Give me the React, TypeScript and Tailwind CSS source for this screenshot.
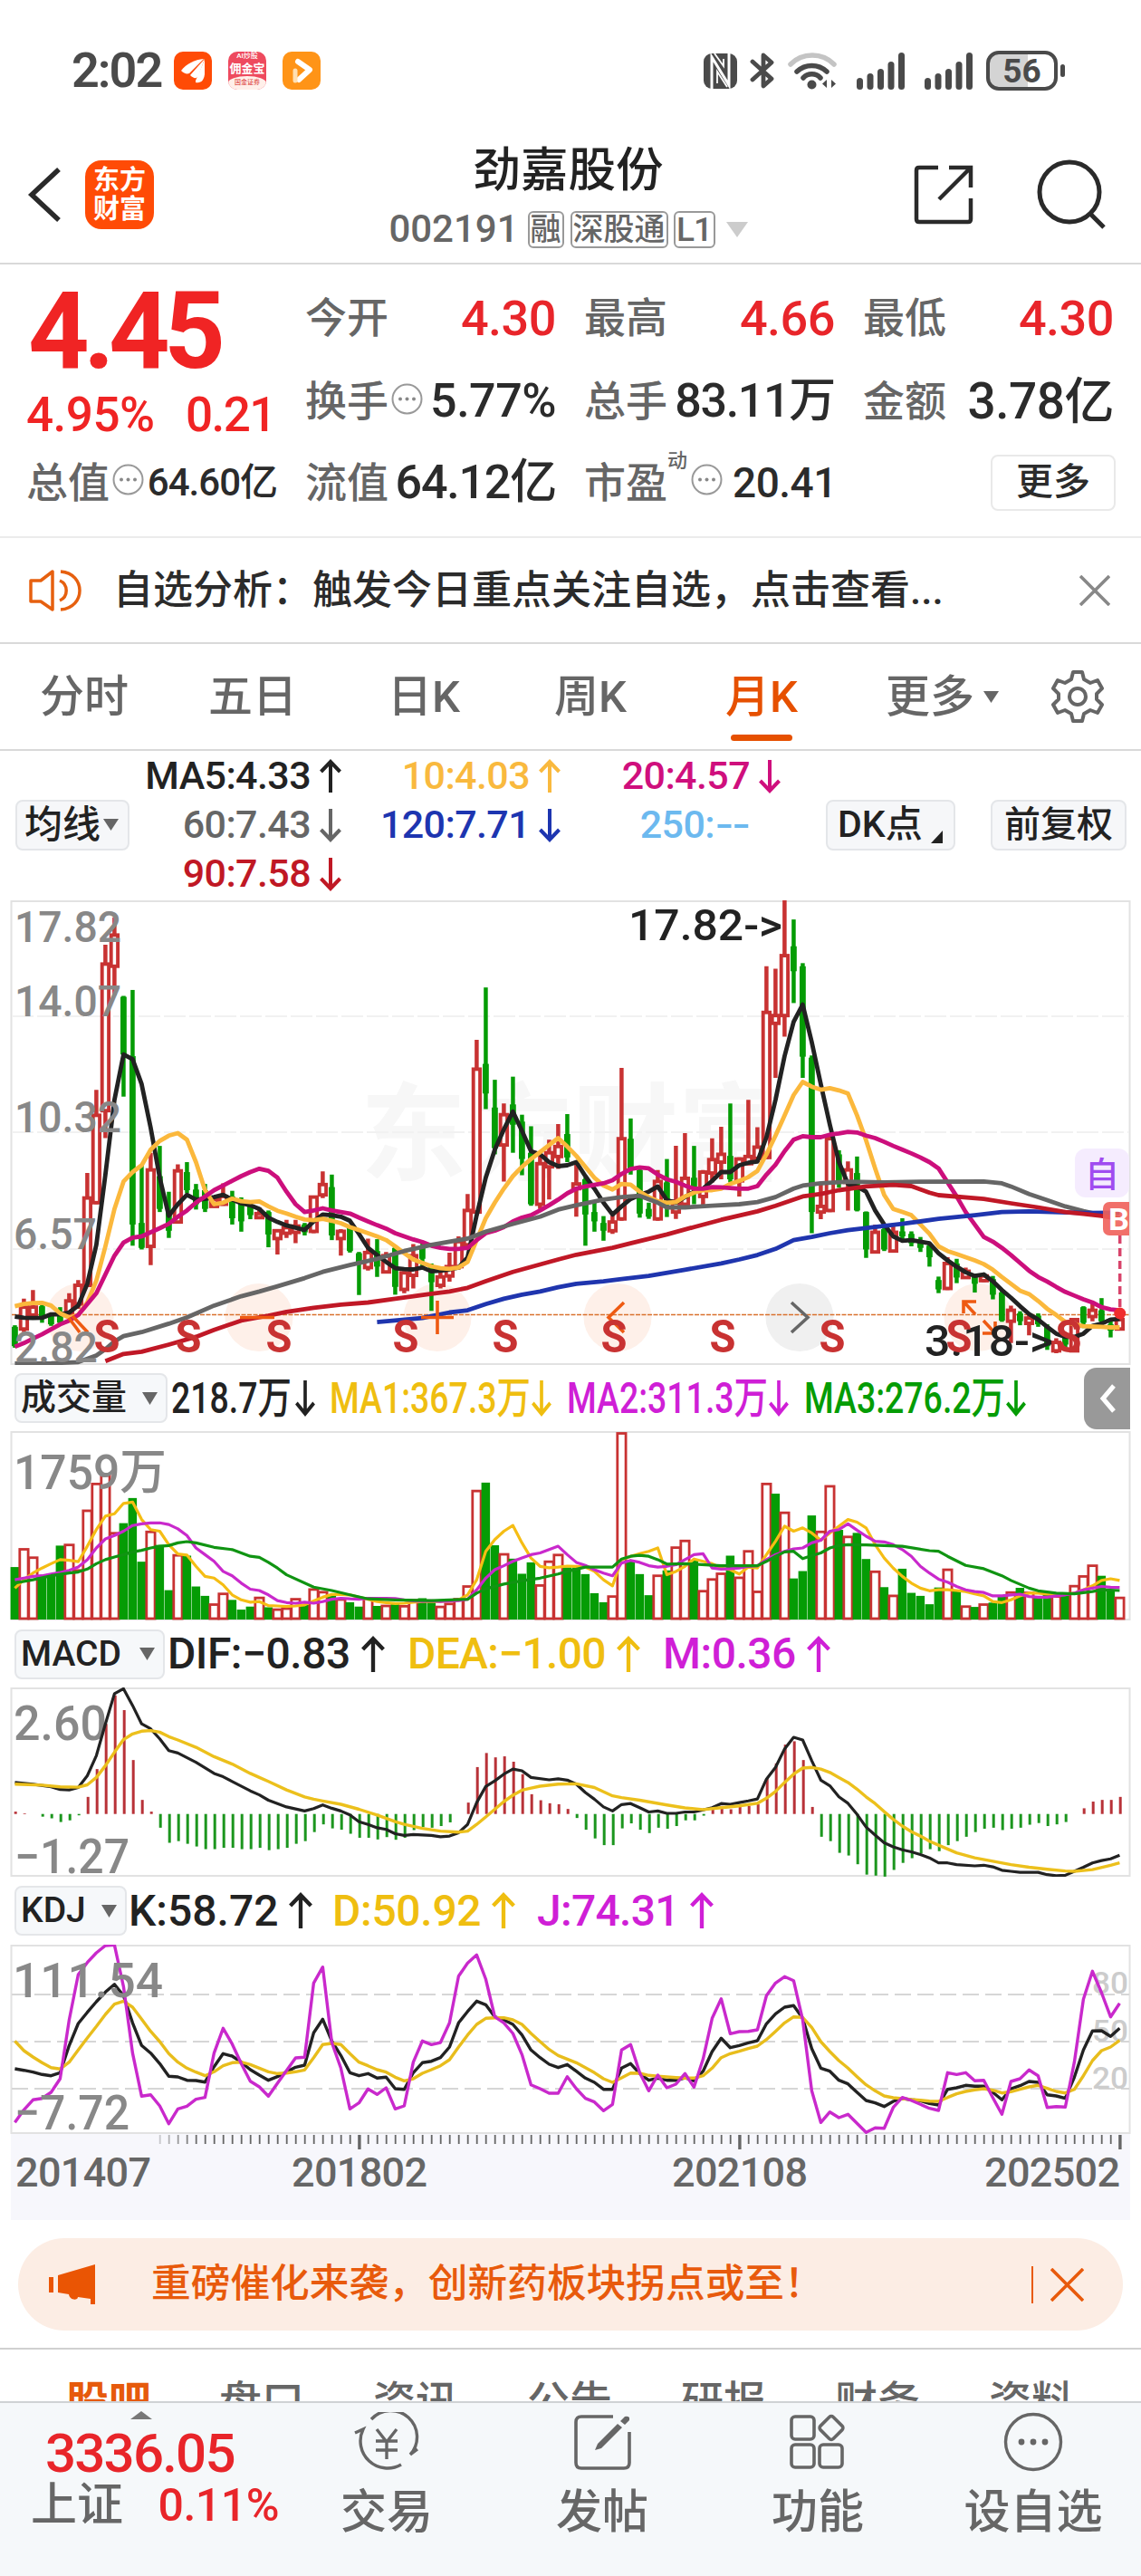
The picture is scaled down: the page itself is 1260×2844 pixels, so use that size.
import React from "react";

type Pt = [number, number];
type Tone = "r" | "g";

const RED = "#c83232";
const GREEN = "#059c05";

const X0 = 16.4;
const STEP = 10;
const xAt = (i: number) => X0 + STEP * i;

const seq = (...v: number[]): Pt[] => v.map((y, i) => [i, y]);

const path = (pts: Pt[], y: (v: number) => number) =>
  pts.map(([i, v], n) => `${n ? "L" : "M"}${xAt(i).toFixed(1)} ${y(v).toFixed(1)}`).join("");

/* ---------- chart data: every value is a depth measured down from the top of its pane group ---------- */

const candles = `g1403,1408,1470,1475 r1318,1345,1415,1425 r1290,1345,1370,1375 g1338,1342,1380,1395 g1365,1370,1400,1405 g1345,1360,1395,1400 r1300,1325,1365,1375 r1258,1275,1335,1350 r915,995,1275,1280 r648,730,1010,1015 r183,245,715,803 r96,152,252,345 g347,350,535,670 g328,540,1080,1148 g890,1075,1155,1160 r850,905,1150,1210 g828,925,1030,1040 g975,1040,1100,1123 r887,908,1072,1076 g880,912,970,980 g950,968,1015,1032 g950,970,1030,1040 r990,1000,1022,1025 r948,990,1015,1020 g972,990,1060,1080 g993,1000,1070,1103 g1015,1020,1050,1063 r1025,1045,1058,1060 g1035,1040,1112,1153 r1095,1100,1125,1176 r1065,1090,1108,1123 r1065,1085,1105,1140 g1075,1080,1105,1115 r987,992,1102,1108 r910,952,985,995 g920,960,1115,1130 r1095,1102,1125,1180 g1085,1092,1165,1170 g1168,1172,1205,1306 r1125,1170,1218,1228 g1127,1165,1215,1248 r1168,1180,1232,1236 g1150,1155,1280,1305 r1230,1235,1288,1300 r1143,1180,1243,1285 g1140,1148,1190,1222 g1205,1215,1265,1357 r1220,1248,1275,1285 r1170,1215,1245,1263 r1118,1135,1215,1225 r982,1035,1145,1150 r488,582,1040,1045 g320,565,660,710 g616,705,835,855 r692,728,825,942 g606,695,760,850 g728,750,870,922 g765,850,1015,1020 r860,885,1015,1030 r808,850,895,1000 r758,830,862,902 g726,790,865,880 r878,950,965,1055 g930,935,1048,1148 g1010,1040,1070,1103 g1053,1075,1100,1132 r1050,1072,1100,1110 r578,805,1062,1068 g740,805,900,920 g895,905,1045,1058 g1010,1030,1055,1062 r905,942,1062,1068 g870,945,1015,1056 r828,1005,1040,1062 r787,932,1015,1025 g828,930,965,1015 r905,912,990,1018 r804,872,915,945 r767,855,880,935 g692,860,935,945 r865,870,940,990 r680,862,885,890 r768,832,868,880 r252,400,865,870 r260,410,435,610 r41,218,410,478 g102,188,268,370 g242,252,542,610 g538,545,1040,1108 r950,1022,1040,1063 r795,805,1035,1040 g842,855,945,962 r878,905,945,1035 g862,915,1035,1038 g1038,1040,1160,1187 r1080,1105,1168,1170 g1080,1095,1160,1165 r1080,1105,1165,1168 g1060,1102,1118,1130 g1102,1110,1140,1150 g1120,1130,1155,1168 g1140,1148,1185,1215 g1247,1258,1288,1300 r1185,1205,1285,1290 g1190,1205,1250,1268 r1218,1230,1250,1252 g1240,1248,1270,1298 r1240,1245,1260,1265 g1245,1255,1305,1320 g1290,1298,1388,1392 r1340,1355,1390,1460 g1358,1365,1390,1403 r1368,1380,1397,1435 g1365,1372,1400,1408 g1400,1408,1470,1482 r1445,1458,1485,1493 g1430,1440,1465,1475 r1380,1385,1485,1490 g1342,1345,1395,1412 r1330,1355,1375,1390 g1316,1355,1390,1400 g1380,1400,1420,1442 r1365,1385,1415,1420`
  .split(" ")
  .map((s) => ({ tone: s[0] as Tone, v: s.slice(1).split(",").map(Number) }));

const ma5 = seq(1375, 1379, 1380, 1379, 1368, 1368, 1362, 1340, 1270, 1145, 920, 680, 535, 550, 630, 770, 930, 1052, 1015, 985, 1000, 998, 992, 985, 1000, 1012, 1018, 1030, 1058, 1072, 1083, 1090, 1097, 1070, 1048, 1050, 1055, 1068, 1110, 1155, 1178, 1200, 1220, 1223, 1224, 1218, 1230, 1228, 1224, 1218, 1185, 1050, 930, 840, 775, 718, 780, 845, 855, 880, 893, 890, 880, 925, 965, 1010, 1048, 1022, 998, 985, 975, 958, 1002, 1010, 992, 975, 965, 940, 912, 912, 890, 882, 878, 800, 680, 540, 430, 375, 495, 630, 760, 880, 950, 958, 975, 1035, 1080, 1118, 1132, 1130, 1135, 1140, 1172, 1195, 1215, 1233, 1245, 1240, 1262, 1290, 1315, 1342, 1367, 1385, 1408, 1430, 1440, 1440, 1430, 1405, 1398, 1385, 1383);
const ma10 = seq(1342, 1335, 1332, 1331, 1340, 1365, 1378, 1370, 1330, 1260, 1150, 1030, 942, 912, 890, 840, 812, 795, 787, 808, 880, 970, 1015, 1010, 997, 1005, 1008, 1006, 1022, 1036, 1045, 1055, 1064, 1066, 1062, 1068, 1076, 1088, 1098, 1108, 1118, 1130, 1150, 1172, 1192, 1203, 1214, 1220, 1222, 1218, 1200, 1130, 1060, 1010, 965, 925, 895, 870, 848, 825, 803, 830, 860, 895, 930, 955, 968, 950, 952, 975, 992, 1005, 1010, 1008, 990, 978, 970, 970, 965, 950, 940, 928, 908, 855, 795, 730, 665, 623, 638, 648, 643, 650, 660, 730, 810, 900, 985, 1030, 1040, 1050, 1080, 1110, 1150, 1165, 1175, 1185, 1195, 1207, 1225, 1248, 1270, 1292, 1303, 1325, 1350, 1370, 1392, 1400, 1406, 1407, 1408, 1410, 1410);
const ma20 = seq(1472, 1460, 1446, 1432, 1416, 1400, 1388, 1370, 1335, 1300, 1240, 1180, 1138, 1122, 1118, 1105, 1092, 1078, 1055, 1035, 1010, 990, 970, 955, 940, 925, 912, 901, 908, 930, 975, 1015, 1040, 1035, 1028, 1035, 1040, 1045, 1058, 1070, 1082, 1093, 1108, 1118, 1128, 1136, 1148, 1155, 1158, 1158, 1155, 1130, 1108, 1100, 1088, 1070, 1058, 1050, 1035, 1018, 1000, 980, 965, 958, 953, 948, 938, 918, 902, 897, 900, 920, 935, 943, 955, 965, 965, 960, 961, 963, 965, 965, 957, 920, 888, 845, 808, 797, 800, 800, 792, 788, 783, 785, 795, 803, 815, 828, 840, 852, 865, 880, 900, 945, 990, 1040, 1080, 1120, 1135, 1155, 1178, 1203, 1228, 1248, 1263, 1280, 1296, 1308, 1320, 1330, 1345, 1352, 1355);
const ma60: Pt[] = [[0, 1526], [4, 1525], [7, 1521], [9, 1500], [10, 1480], [11, 1455], [12, 1438], [14, 1425], [17, 1398], [19, 1378], [22, 1340], [25, 1310], [27, 1295], [29, 1278], [32, 1252], [34, 1232], [37, 1210], [40, 1190], [43, 1165], [46, 1145], [50, 1125], [52, 1103], [55, 1078], [58, 1055], [60, 1032], [62, 1018], [65, 1000], [67, 992], [69, 988], [71, 1010], [72, 1025], [74, 1025], [77, 1020], [80, 1015], [82, 1008], [84, 992], [86, 965], [87, 955], [89, 948], [92, 943], [96, 945], [100, 943], [107, 942], [109, 948], [110, 958], [112, 982], [114, 1002], [116, 1022], [118, 1037], [120, 1050], [122, 1060]];
const ma90: Pt[] = [[10, 1518], [12, 1495], [14, 1488], [17, 1465], [20, 1440], [22, 1418], [25, 1388], [28, 1372], [30, 1360], [33, 1347], [36, 1337], [39, 1330], [42, 1318], [46, 1302], [48, 1295], [50, 1283], [52, 1262], [55, 1232], [58, 1208], [60, 1192], [62, 1177], [66, 1155], [68, 1140], [72, 1112], [75, 1088], [78, 1065], [82, 1038], [84, 1020], [87, 990], [89, 982], [91, 970], [94, 958], [97, 953], [99, 957], [101, 978], [102, 986], [107, 998], [110, 1012], [113, 1025], [116, 1040], [118, 1046], [120, 1052], [122, 1062]];
const ma120: Pt[] = [[40, 1393], [45, 1380], [48, 1362], [50, 1355], [52, 1335], [54, 1318], [56, 1305], [58, 1295], [60, 1281], [62, 1270], [65, 1262], [67, 1255], [70, 1245], [74, 1225], [78, 1205], [80, 1192], [82, 1178], [84, 1158], [86, 1130], [88, 1120], [90, 1108], [92, 1098], [95, 1088], [98, 1078], [102, 1062], [106, 1050], [109, 1040], [112, 1038], [118, 1043], [122, 1042]];

const volumes = `g622 r565 r590 g650 g642 g558 r552 r628 r450 r370 r345 r517 g491 g416 g606 r513 g556 g691 r583 g588 g680 g708 r730 r698 g720 g749 g740 r710 g742 r745 r742 r714 g735 r685 r693 g705 r715 g727 g740 r712 g738 r734 g733 r735 r717 g715 g725 r737 r728 r714 r676 r391 g370 g557 r580 g597 g642 g608 r673 r602 r582 g623 g623 g643 g700 g727 r706 r219 g603 g643 g706 r644 g632 r560 r540 g603 r690 r655 r638 g588 r650 r571 r692 r370 g403 r456 g656 g634 g468 r513 r377 g511 r528 g520 g598 r632 g682 r704 g627 g699 g708 g733 g683 r626 g690 r736 g741 r730 g728 g708 r694 g684 r695 g710 g705 r706 g700 r675 r646 r614 g648 g690 r710`
  .split(" ")
  .map((s) => ({ tone: s[0] as Tone, v: Number(s.slice(1)) }));
const vol1 = seq(685, 660, 640, 625, 612, 600, 602, 606, 560, 510, 470, 463, 432, 428, 480, 510, 515, 555, 583, 586, 620, 650, 655, 675, 705, 720, 727, 725, 737, 738, 740, 738, 735, 723, 712, 704, 704, 705, 712, 718, 725, 728, 731, 730, 727, 725, 725, 725, 722, 720, 705, 660, 575, 540, 515, 498, 550, 595, 620, 624, 622, 619, 620, 622, 635, 660, 678, 600, 590, 582, 575, 565, 645, 635, 620, 598, 605, 612, 625, 630, 643, 622, 625, 585, 545, 500, 515, 505, 520, 542, 520, 500, 480, 488, 505, 555, 595, 625, 650, 670, 685, 693, 690, 690, 692, 695, 702, 708, 725, 728, 720, 708, 700, 700, 703, 703, 703, 700, 690, 678, 662, 657, 662);
const vol2 = seq(660, 655, 650, 648, 643, 638, 632, 622, 600, 565, 538, 528, 515, 498, 493, 490, 490, 495, 508, 528, 565, 585, 605, 635, 648, 670, 688, 692, 705, 722, 728, 730, 727, 730, 725, 718, 715, 717, 718, 715, 715, 715, 716, 720, 723, 724, 723, 725, 723, 722, 718, 690, 655, 630, 618, 605, 595, 585, 580, 570, 560, 585, 608, 617, 630, 640, 648, 610, 602, 608, 618, 622, 620, 615, 600, 585, 582, 625, 628, 627, 625, 620, 618, 600, 585, 575, 568, 565, 550, 542, 515, 510, 493, 512, 530, 545, 547, 555, 570, 590, 620, 640, 658, 667, 680, 690, 695, 698, 708, 708, 705, 703, 710, 712, 712, 708, 705, 700, 690, 685, 680, 682, 683);
const vol3: Pt[] = [[0, 670], [2, 660], [4, 648], [6, 640], [7, 637], [8, 628], [9, 612], [10, 600], [11, 592], [12, 585], [13, 577], [14, 572], [15, 565], [16, 560], [17, 558], [18, 550], [19, 546], [20, 550], [22, 563], [24, 570], [26, 590], [27, 593], [28, 608], [29, 625], [30, 645], [33, 682], [35, 692], [37, 705], [39, 717], [42, 720], [46, 722], [50, 718], [51, 700], [52, 687], [54, 673], [56, 663], [58, 655], [60, 643], [61, 635], [63, 622], [66, 622], [67, 598], [68, 590], [69, 587], [70, 590], [71, 600], [72, 613], [74, 612], [78, 618], [82, 618], [83, 605], [84, 590], [85, 577], [86, 575], [87, 597], [88, 588], [89, 580], [90, 565], [91, 558], [92, 555], [94, 556], [98, 560], [101, 573], [102, 575], [103, 590], [105, 617], [107, 627], [109, 648], [110, 662], [112, 685], [113, 693], [115, 700], [117, 702], [119, 695], [120, 690], [122, 692]];

const MACD_ZERO = 1359;
const macdBars = [1352, 1357, 1359, 1367, 1372, 1383, 1378, 1363, 1308, 1225, 1090, 1005, 1049, 1198, 1317, 1352, 1400, 1445, 1440, 1448, 1456, 1464, 1464, 1460, 1460, 1464, 1464, 1460, 1467, 1464, 1460, 1448, 1440, 1413, 1390, 1402, 1406, 1418, 1430, 1430, 1435, 1428, 1436, 1430, 1407, 1398, 1400, 1395, 1384, 1359, 1325, 1219, 1177, 1190, 1187, 1203, 1240, 1300, 1318, 1327, 1330, 1344, 1371, 1406, 1432, 1452, 1452, 1402, 1387, 1406, 1416, 1400, 1403, 1395, 1378, 1378, 1364, 1345, 1335, 1345, 1338, 1335, 1330, 1252, 1208, 1152, 1142, 1198, 1338, 1427, 1440, 1475, 1483, 1509, 1540, 1543, 1546, 1526, 1505, 1491, 1477, 1464, 1470, 1452, 1440, 1427, 1413, 1403, 1400, 1407, 1403, 1400, 1391, 1386, 1395, 1390, 1383, 1359, 1342, 1322, 1317, 1317, 1308];
const dif: Pt[] = [[0, 1265], [2, 1270], [4, 1278], [5, 1286], [6, 1287], [7, 1280], [8, 1245], [9, 1185], [10, 1090], [11, 1000], [12, 985], [13, 1035], [14, 1090], [15, 1105], [16, 1135], [17, 1170], [18, 1177], [20, 1205], [22, 1238], [23, 1248], [24, 1262], [26, 1290], [27, 1302], [28, 1318], [30, 1338], [32, 1350], [33, 1343], [34, 1332], [35, 1342], [36, 1350], [37, 1362], [38, 1382], [39, 1390], [40, 1400], [41, 1405], [42, 1418], [43, 1423], [44, 1420], [46, 1423], [47, 1427], [48, 1425], [49, 1415], [50, 1390], [51, 1325], [52, 1277], [53, 1260], [54, 1240], [55, 1225], [56, 1230], [57, 1250], [59, 1257], [60, 1254], [61, 1258], [62, 1270], [63, 1295], [64, 1315], [65, 1338], [66, 1350], [67, 1331], [68, 1328], [69, 1340], [70, 1353], [71, 1350], [72, 1357], [73, 1357], [74, 1353], [75, 1353], [76, 1347], [77, 1340], [78, 1328], [79, 1330], [80, 1325], [81, 1320], [82, 1314], [83, 1255], [84, 1220], [85, 1165], [86, 1130], [87, 1138], [88, 1200], [89, 1258], [90, 1275], [91, 1308], [92, 1327], [93, 1360], [94, 1398], [95, 1422], [96, 1445], [97, 1457], [98, 1466], [99, 1472], [100, 1480], [101, 1490], [102, 1505], [103, 1505], [104, 1510], [106, 1514], [107, 1512], [108, 1517], [109, 1527], [110, 1530], [111, 1533], [113, 1533], [114, 1540], [115, 1543], [116, 1542], [117, 1530], [118, 1518], [119, 1505], [120, 1498], [121, 1493], [122, 1482]];
const dea: Pt[] = [[0, 1270], [3, 1273], [5, 1278], [7, 1279], [8, 1272], [9, 1250], [10, 1215], [11, 1175], [12, 1137], [13, 1120], [14, 1112], [15, 1110], [16, 1115], [17, 1128], [18, 1138], [20, 1160], [22, 1188], [24, 1210], [26, 1238], [27, 1250], [28, 1262], [30, 1287], [32, 1308], [33, 1315], [34, 1320], [36, 1330], [38, 1345], [40, 1362], [42, 1382], [43, 1390], [45, 1402], [47, 1410], [49, 1413], [50, 1410], [51, 1390], [52, 1368], [53, 1345], [54, 1322], [55, 1303], [56, 1288], [57, 1282], [58, 1276], [60, 1270], [62, 1269], [64, 1280], [66, 1305], [67, 1310], [69, 1318], [72, 1332], [74, 1341], [76, 1346], [78, 1340], [80, 1335], [82, 1327], [83, 1312], [84, 1292], [85, 1265], [86, 1240], [87, 1222], [88, 1220], [89, 1225], [90, 1235], [91, 1250], [92, 1265], [93, 1285], [94, 1308], [95, 1328], [96, 1352], [97, 1375], [98, 1395], [99, 1412], [100, 1425], [101, 1440], [102, 1452], [104, 1475], [106, 1490], [108, 1500], [110, 1510], [112, 1518], [114, 1524], [116, 1529], [117, 1530], [119, 1525], [121, 1512], [122, 1505]];

const kLine = seq(642, 647, 653, 661, 665, 655, 565, 492, 455, 420, 388, 362, 400, 490, 565, 590, 625, 667, 669, 680, 681, 686, 635, 592, 600, 620, 645, 663, 680, 668, 652, 637, 630, 523, 478, 550, 598, 655, 665, 658, 673, 670, 708, 710, 655, 622, 617, 605, 570, 490, 452, 418, 430, 470, 480, 495, 530, 580, 605, 627, 638, 628, 650, 673, 687, 710, 710, 640, 625, 658, 680, 673, 680, 680, 672, 682, 650, 585, 541, 572, 565, 556, 549, 493, 460, 438, 433, 475, 575, 640, 650, 680, 692, 720, 747, 755, 767, 750, 740, 745, 748, 757, 762, 710, 705, 697, 700, 700, 720, 745, 708, 698, 684, 687, 728, 732, 740, 670, 580, 517, 516, 535, 508);
const dLine = seq(550, 582, 603, 622, 638, 643, 620, 580, 540, 502, 462, 428, 418, 438, 478, 518, 552, 592, 620, 640, 653, 665, 652, 632, 622, 620, 628, 640, 652, 658, 656, 652, 646, 605, 562, 558, 562, 592, 620, 632, 645, 653, 670, 682, 675, 657, 645, 632, 612, 570, 530, 495, 475, 473, 473, 480, 495, 525, 552, 578, 598, 610, 622, 638, 655, 675, 687, 672, 656, 657, 664, 667, 669, 671, 673, 673, 665, 640, 605, 592, 584, 575, 567, 545, 518, 490, 470, 472, 505, 552, 585, 615, 640, 668, 695, 715, 732, 738, 741, 744, 746, 749, 750, 737, 725, 717, 712, 708, 713, 722, 718, 710, 702, 697, 707, 717, 722, 710, 665, 615, 582, 570, 548);
const jLine = seq(820, 778, 745, 740, 720, 675, 480, 330, 290, 258, 234, 232, 370, 590, 733, 728, 765, 824, 775, 766, 743, 737, 590, 508, 560, 625, 683, 702, 733, 690, 648, 606, 604, 358, 305, 555, 640, 775, 755, 709, 727, 705, 775, 765, 620, 550, 562, 555, 490, 335, 292, 265, 345, 470, 490, 525, 595, 695, 708, 723, 723, 668, 708, 740, 752, 781, 760, 580, 562, 655, 715, 663, 705, 693, 658, 703, 610, 475, 410, 526, 519, 518, 513, 400, 358, 337, 350, 480, 715, 820, 785, 804, 793, 823, 853, 838, 839, 770, 737, 747, 760, 773, 780, 655, 661, 655, 682, 680, 738, 793, 684, 675, 646, 665, 770, 767, 769, 620, 412, 319, 390, 470, 425);

/* ---------- small pieces ---------- */

function Line({ pts, y, color, w }: { pts: Pt[]; y: (v: number) => number; color: string; w: number }) {
  return <path d={path(pts, y)} fill="none" stroke={color} strokeWidth={w} strokeLinejoin="round" />;
}

function Label({ x, y, w, size, fill = "#888888", weight = 500, children }: { x: number; y: number; w: number; size: number; fill?: string; weight?: number; children: string }) {
  return (
    <text x={x} y={y} fontSize={size} fontWeight={weight} fill={fill} textLength={w} lengthAdjust="spacingAndGlyphs">
      {children}
    </text>
  );
}

function Arrow({ up = false, h = 38, w = 24 }: { up?: boolean; h?: number; w?: number }) {
  return (
    <svg width={w} height={h} viewBox="0 0 24 38" preserveAspectRatio="none" fill="none" stroke="currentColor" strokeWidth="4" className="shrink-0">
      <path d={up ? "M12 37V3M1.500 14 12 3l10.500 11" : "M12 1v34M1.500 24 12 35l10.500-11"} />
    </svg>
  );
}

function Tri({ className = "" }: { className?: string }) {
  return (
    <svg viewBox="0 0 17 14" preserveAspectRatio="none" fill="currentColor" className={className}>
      <path d="M0 0h17L8.500 14z" />
    </svg>
  );
}

function More() {
  return (
    <svg width="35" height="35" viewBox="0 0 35 35" className="-mt-[6px] shrink-0">
      <circle cx="17.500" cy="17.500" r="16" fill="none" stroke="#999" strokeWidth="2" />
      <circle cx="10" cy="17.500" r="2" fill="#888" />
      <circle cx="17.500" cy="17.500" r="2" fill="#888" />
      <circle cx="25" cy="17.500" r="2" fill="#888" />
    </svg>
  );
}

function Signal() {
  return (
    <svg width="53" height="42" viewBox="0 0 53 42" fill="#4a4a4a">
      <rect x="0" y="29" width="7" height="13" rx="3.500" />
      <rect x="11.500" y="24" width="7" height="18" rx="3.500" />
      <rect x="23" y="19" width="7" height="23" rx="3.500" />
      <rect x="34.500" y="11" width="7" height="31" rx="3.500" />
      <rect x="46" y="1" width="7" height="41" rx="3.500" />
    </svg>
  );
}

function StatusBar() {
  return (
    <div className="flex h-[140px] items-center justify-between pt-4 pr-[84px] pl-[79px] text-[#4a4a4a]">
      <div className="flex items-center">
        <span className="w-[113px] text-[54px] leading-[54px] font-semibold tracking-[-2px]">2:02</span>
        <svg width="42" height="42" viewBox="0 0 42 42" className="mr-[18px]">
          <rect width="42" height="42" rx="10" fill="#ff4b06" />
          <path d="M8 21C14 13 23 9 33 8L17 24C14 25 11 24 8 21z" fill="#fff" />
          <path d="M18 26 34 8 27 27C25 30 22 30 18 26z" fill="#fff" />
          <path d="M24 32 34 9 34 25C33 32 30 35 24 34z" fill="#fff" />
        </svg>
        <div className="mr-[18px] flex h-[42px] w-[42px] flex-col items-center overflow-hidden rounded-[10px] bg-[#ee4a5e] text-white">
          <span className="text-[8px] leading-[10px]">AI炒股</span>
          <span className="text-[13px] leading-[17px] font-bold">佣金宝</span>
          <span className="w-full rounded-t-[50%] bg-[#fff0ea] text-center text-[7px] leading-[15px] text-[#e0504e]">国金证券</span>
        </div>
        <svg width="42" height="42" viewBox="0 0 42 42">
          <rect width="42" height="42" rx="10" fill="#ff9417" />
          <path d="M17 11 30 20 18 31" fill="none" stroke="#fff" strokeWidth="6" strokeLinecap="round" strokeLinejoin="round" />
          <path d="M14 21v11" stroke="#ffe0b3" strokeWidth="5" strokeLinecap="round" />
        </svg>
      </div>
      <div className="flex items-center">
        <svg width="37" height="39" viewBox="0 0 37 39">
          <rect width="37" height="39" rx="9" fill="#4a4a4a" />
          <path d="M9 39V4L28 35V0" fill="none" stroke="#fff" strokeWidth="3" />
          <path d="M15 33V20L26 37M22 6v8L12 0" fill="none" stroke="#fff" strokeWidth="1.800" />
        </svg>
        <svg width="28" height="42" viewBox="0 0 28 42" fill="none" stroke="#4a4a4a" strokeWidth="4.800" strokeLinejoin="round" strokeLinecap="round" className="ml-[14px]">
          <path d="M3 11 24 30 15 38V4L24 12 3 31" />
        </svg>
        <svg width="54" height="42" viewBox="0 0 54 42" fill="none" strokeWidth="5.500" strokeLinecap="round" className="ml-[14px]">
          <path d="M3 14a34 34 0 0 1 48 0" stroke="#c4c4c4" />
          <path d="M10 22a24 24 0 0 1 33 0" stroke="#4a4a4a" />
          <path d="M17 29a13 13 0 0 1 19 0" stroke="#4a4a4a" />
          <circle cx="26.500" cy="36.500" r="5" fill="#4a4a4a" />
          <path d="M43 31v9l-5-4.500zM48 40v-9l5 4.500z" fill="#4a4a4a" />
        </svg>
        <div className="ml-[22px] flex gap-[22px]">
          <Signal />
          <Signal />
        </div>
        <div className="ml-[15px] flex h-[44px] w-[79px] items-center justify-center rounded-[14px] border-4 border-[#4a4a4a] bg-linear-to-r from-[#d4d4d4] from-59% to-white to-59% text-[37px] leading-[37px] font-bold">56</div>
        <div className="ml-[3px] h-[14px] w-[5px] rounded-full bg-[#4a4a4a]" />
      </div>
    </div>
  );
}

function Header() {
  return (
    <div className="grid h-[152px] grid-cols-[1fr_auto_1fr] items-center border-b-2 border-[#d9d9d9] pr-[38px] pl-[30px]">
      <div className="flex items-center">
        <svg width="38" height="62" viewBox="0 0 38 62" fill="none" stroke="#2a2a2a" strokeWidth="5.500">
          <path d="M35 3 5 31l30 28" />
        </svg>
        <div className="ml-[26px] flex h-[76px] w-[76px] flex-col items-center justify-center rounded-[18px] bg-[#ff4b06] text-[29px] leading-[32px] font-bold text-white">
          <span>东方</span>
          <span>财富</span>
        </div>
      </div>
      <div className="flex flex-col items-center pt-[4px] pl-[3px]">
        <span className="text-[52.500px] leading-[56px] font-medium text-[#222]">劲嘉股份</span>
        <div className="mt-[16px] flex items-center text-[#666]">
          <span className="text-[42px] leading-[42px]">002191</span>
          <span className="ml-[10px] flex h-[41px] w-[40px] items-center justify-center rounded-md border-2 border-[#999] text-[34px] leading-[34px]">融</span>
          <span className="ml-[7px] flex h-[41px] w-[108px] items-center justify-center rounded-md border-2 border-[#999] text-[34px] leading-[34px]">深股通</span>
          <span className="ml-[6px] flex h-[41px] w-[46px] items-center justify-center rounded-md border-2 border-[#999] text-[37px] leading-[37px] tracking-[-1px]">L1</span>
          <Tri className="ml-[12px] h-[17px] w-[24px] text-[#ccc]" />
        </div>
      </div>
      <div className="flex items-center justify-end">
        <svg width="70" height="70" viewBox="0 0 70 70" fill="none" stroke="#2a2a2a" strokeWidth="4.500">
          <path d="M29 5H8q-3 0-3 3v54q0 3 3 3h54q3 0 3-3V39M41 5h24v22M63 7 30 40" />
        </svg>
        <svg width="78" height="78" viewBox="0 0 78 78" fill="none" stroke="#2a2a2a" strokeWidth="5" className="ml-[67px]">
          <circle cx="37" cy="36" r="33" />
          <path d="M60 60 75 75" />
        </svg>
      </div>
    </div>
  );
}

function Quotes() {
  const lab = "text-[46px] text-[#666]";
  const cell = "flex items-center justify-between";
  const red = "pt-[2px] text-[54px] tracking-[-0.500px] text-[#e8252a]";
  return (
    <div className="grid h-[302px] grid-cols-[277px_277px_277px_277px] grid-rows-[92px_92px_87px] gap-x-[31px] border-b-2 border-[#ebebeb] pt-[13px] pl-[29px] leading-none whitespace-nowrap text-[#2b2b2b]">
      <div className="row-span-2 flex flex-col text-[#f02424]">
        <div className="mt-[2px] ml-[2px] flex h-[118px] items-center text-[118px] font-bold tracking-[-6.500px]">4.45</div>
        <div className="flex h-[64px] items-center justify-between pt-[2px] text-[53px]">
          <span className="tracking-[-0.500px]">4.95%</span>
          <span className="mr-[2px] tracking-[-1.500px]">0.21</span>
        </div>
      </div>
      <div className={cell}><span className={lab}>今开</span><span className={red}>4.30</span></div>
      <div className={cell}><span className={lab}>最高</span><span className={red}>4.66</span></div>
      <div className={cell}><span className={lab}>最低</span><span className={red}>4.30</span></div>
      <div className="flex items-center"><span className={lab}>换手</span><span className="ml-[3px]"><More /></span><span className="ml-auto text-[52px] tracking-[-0.500px]">5.77%</span></div>
      <div className={cell}><span className={lab}>总手</span><span className="text-[52px] tracking-[-1.300px]">83.11万</span></div>
      <div className={cell}><span className={lab}>金额</span><span className="text-[55px] tracking-[-0.500px]">3.78亿</span></div>
      <div className="flex items-center"><span className={lab}>总值</span><span className="ml-[3px]"><More /></span><span className="ml-auto text-[42px] tracking-[-1px]">64.60亿</span></div>
      <div className={cell}><span className={lab}>流值</span><span className="text-[52px] tracking-[-1.200px]">64.12亿</span></div>
      <div className="flex items-center"><span className={lab}>市盈</span><span className="-mt-[48px] text-[22px] text-[#666]">动</span><span className="ml-[4px]"><More /></span><span className="ml-[11px] text-[46px] tracking-[-0.500px]">20.41</span></div>
      <div className="flex items-center justify-end">
        <span className="-mr-[2px] flex h-[62px] w-[138px] items-center justify-center rounded-lg border-2 border-[#e9e9e9] text-[41px]">更多</span>
      </div>
    </div>
  );
}

function Notice() {
  return (
    <div className="flex h-[117px] items-center border-b-2 border-[#d9d9d9] pr-[34px] pl-[32px] leading-none text-[#2b2b2b]">
      <svg width="60" height="48" viewBox="0 0 60 48" fill="none" stroke="#e6600f" strokeWidth="3.500">
        <path d="M2 13h11L26 3v42L13 36H2zM26 3v42M34 13a12 12 0 0 1 0 22M35 3c28 2 28 40 0 42" strokeLinejoin="round" />
      </svg>
      <span className="ml-[33px] text-[44px]">自选分析：触发今日重点关注自选，点击查看...</span>
      <svg width="34" height="34" viewBox="0 0 34 34" stroke="#888" strokeWidth="3.600" className="ml-auto">
        <path d="M1 1 33 33M33 1 1 33" />
      </svg>
    </div>
  );
}

function PeriodTabs() {
  return (
    <div className="flex h-[118px] items-center border-b-2 border-[#d9d9d9] pl-[44px] text-[49px] leading-none text-[#666]">
      <span className="w-[186px]">分时</span>
      <span className="w-[198px]">五日</span>
      <span className="w-[184px]">日K</span>
      <span className="w-[189px]">周K</span>
      <div className="relative w-[177px] text-[#e65000]">
        月K
        <span className="absolute -bottom-[24px] left-[6px] h-[7px] w-[68px] rounded-full bg-[#e65000]" />
      </div>
      <span>更多</span>
      <Tri className="ml-[10px] h-[13px] w-[17px]" />
      <svg width="60" height="60" viewBox="0 0 60 60" fill="none" stroke="#666" strokeWidth="4" strokeLinejoin="round" className="ml-[57px]">
        <path d="M25 3h10l2 8 7 4 8-3 5 9-6 6v6l6 6-5 9-8-3-7 4-2 8H25l-2-8-7-4-8 3-5-9 6-6v-6l-6-6 5-9 8 3 7-4z" />
        <circle cx="30" cy="30" r="9" />
      </svg>
    </div>
  );
}

function MaHeader() {
  const item = "flex items-center justify-end gap-[10px]";
  const chip = "flex h-[56px] items-center rounded-lg border-2 border-[#e4e6e9] bg-[#f6f7f9] text-[#222]";
  return (
    <div className="flex h-[165px] items-center pb-[2px] pl-[17px] text-[43px] leading-none whitespace-nowrap">
      <div className={chip + " w-[126px] pl-[8px] text-[42px]"}>
        均线
        <Tri className="ml-[3px] h-[13px] w-[17px] text-[#666]" />
      </div>
      <div className="grid h-[162px] grid-cols-[234px_242px_243px] grid-rows-3 tracking-[-0.600px]">
        <div className={item + " text-[#222]"}>MA5:4.33<Arrow up /></div>
        <div className={item + " text-[#f9b93e]"}>10:4.03<Arrow up /></div>
        <div className={item + " text-[#cf0f7d]"}>20:4.57<Arrow /></div>
        <div className={item + " text-[#666]"}>60:7.43<Arrow /></div>
        <div className={item + " text-[#1d35b0]"}>120:7.71<Arrow /></div>
        <div className="flex items-center justify-end pr-[34px] text-[#6cb9ef]">250:<span className="origin-right scale-x-[1.350] pl-[11px]">--</span></div>
        <div className={item + " text-[#c01824]"}>90:7.58<Arrow /></div>
      </div>
      <div className={chip + " ml-[50px] w-[143px] pl-[11px] text-[41px]"}>
        DK点
        <svg width="13" height="14" viewBox="0 0 13 14" className="mt-[26px] ml-[9px]"><path d="M13 0v14H0z" fill="#222" /></svg>
      </div>
      <div className={chip + " ml-[39px] w-[150px] justify-center text-[40px]"}>前复权</div>
    </div>
  );
}

function Pane({ h, children }: { h: number; children: React.ReactNode }) {
  return (
    <svg width="1260" height={h} viewBox={`0 0 1260 ${h}`} className="block font-[Roboto,'Noto_Sans_CJK_SC',sans-serif]">
      <rect x="12.500" y="1" width="1235" height={h - 2} fill="none" stroke="#e2e2e2" strokeWidth="2" />
      {children}
    </svg>
  );
}

function PriceChart() {
  const y = (v: number) => v / 2.904 - 14;
  const pads = [88, 286, 483, 682, 883, 1080];
  return (
    <Pane h={513}>
      <text x="398" y="300" fontSize="117" fontWeight="700" fill="#f7f7f7">东方财富</text>
      {[128, 256, 385].map((g) => (
        <path key={g} d={`M13 ${g}H1247`} stroke="#f1f1f1" strokeWidth="2" strokeDasharray="24 4" />
      ))}
      {pads.map((cx) => (
        <circle key={cx} cx={cx} cy="460.500" r="37.500" fill={cx === 883 ? "#f0f0f0" : "#fef0e9"} />
      ))}
      <path d="M13 457.500H1247" stroke="#d9712e" strokeWidth="1.500" strokeDasharray="5 1.500" />
      {candles.map(({ tone, v }, i) => {
        const x = xAt(i);
        const [hi, top, bot, lo] = v.map(y);
        return tone === "g" ? (
          <g key={i} fill={GREEN}>
            <rect x={x - 2.2} y={hi} width="4.500" height={lo - hi} />
            <rect x={x - 3.4} y={top} width="6.800" height={bot - top} />
          </g>
        ) : (
          <g key={i}>
            <path d={`M${x} ${hi}V${top}M${x} ${bot}V${lo}`} stroke={RED} strokeWidth="4.500" />
            <rect x={x - 3.7} y={top} width="7.400" height={Math.max(bot - top, 2)} fill="#fff" stroke={RED} strokeWidth="3.900" />
          </g>
        );
      })}
      <Line pts={ma5} y={y} color="#222222" w={4.8} />
      <Line pts={ma10} y={y} color="#fbb83c" w={4.8} />
      <Line pts={ma20} y={y} color="#cc0f7c" w={4.8} />
      <Line pts={ma60} y={y} color="#666666" w={4.8} />
      <Line pts={ma120} y={y} color="#1f35ae" w={4.8} />
      <Line pts={ma90} y={y} color="#c01826" w={4.8} />
      <g fill="none" stroke="#ee5a12" strokeWidth="3.600">
        <path d="M76 461 88 477M80 459 97 477" />
        <path d="M265 460.500H303" />
        <path d="M465 460.500H501M483 442V479" />
        <path d="M689 444 672 460.500 689 477" />
        <path d="M874 444 892 460.500 874 477" stroke="#666" />
        <path d="M1064 456V443H1078M1064 443 1077 457M1099 465V478H1085M1099 478 1086 464" />
      </g>
      <Label x={16} y={46} w={118} size={49}>17.82</Label>
      <Label x={16} y={128} w={118} size={49}>14.07</Label>
      <Label x={16} y={256} w={118} size={49}>10.32</Label>
      <Label x={15} y={385} w={92} size={49}>6.57</Label>
      <Label x={16} y={510} w={92} size={49}>2.82</Label>
      <Label x={694} y={44} w={170} size={49} fill="#222">{"17.82->"}</Label>
      <Label x={1021} y={503} w={142} size={49} fill="#222">{"3.18->"}</Label>
      {[118, 208, 308, 448, 558, 678, 798, 919, 1059, 1180].map((sx) => (
        <text key={sx} x={sx} y={499} fontSize="50" fontWeight="700" fill={RED} textAnchor="middle" textLength="29" lengthAdjust="spacingAndGlyphs">S</text>
      ))}
      <path d="M1236.700 370V452" stroke="#d8436a" strokeWidth="3.500" strokeDasharray="9 5" />
      <circle cx="1236.700" cy="456" r="6.500" fill="#f02d2d" />
      <rect x="1187" y="274" width="60" height="54" rx="12" fill="#f5ecfe" />
      <text x="1217" y="316" fontSize="38" fill="#a04cf0" textAnchor="middle">自</text>
      <path d="M1247 333h-22a7 7 0 0 0-7 7v23a7 7 0 0 0 7 7h22z" fill="#f0605a" fillOpacity="0.9" />
      <text x="1224" y="364" fontSize="34" fontWeight="700" fill="#fff" textLength="23" lengthAdjust="spacingAndGlyphs">B</text>
    </Pane>
  );
}

function Chip({ children, className }: { children: string; className: string }) {
  return (
    <div className={"flex h-[55px] shrink-0 items-center justify-between rounded-lg border-2 border-[#e4e6e9] bg-[#f6f8fa] pr-[9px] pl-[5px] text-[39px] text-[#222] " + className}>
      {children}
      <Tri className="h-[14px] w-[17px] text-[#666]" />
    </div>
  );
}

function VolumeHeader() {
  const part = "flex w-[262px] items-center";
  const num = "origin-left scale-x-[0.780] text-[48px]";
  return (
    <div className="relative flex h-[73px] items-center pl-[16px] leading-none whitespace-nowrap">
      <Chip className="w-[169px]">成交量</Chip>
      <div className="ml-[4px] flex w-[175px] items-center text-[#222]"><span className="w-[137px]"><span className={"block " + num}>218.7万</span></span><Arrow w={22} h={41} /></div>
      <div className={part + " text-[#efbe10]"}><span className="w-[223px]"><span className={"block " + num}>MA1:367.3万</span></span><Arrow w={22} h={41} /></div>
      <div className={part + " text-[#cf1fd6]"}><span className="w-[223px]"><span className={"block " + num}>MA2:311.3万</span></span><Arrow w={22} h={41} /></div>
      <div className={part + " text-[#059c05]"}><span className="w-[223px]"><span className={"block " + num}>MA3:276.2万</span></span><Arrow w={22} h={41} /></div>
      <div className="absolute top-[3px] left-[1197px] flex h-[68px] w-[51px] items-center justify-center rounded-l-[14px] bg-[#999]">
        <svg width="18" height="32" viewBox="0 0 18 32" fill="none" stroke="#fff" strokeWidth="5"><path d="M16 2 4 16l12 14" /></svg>
      </div>
    </div>
  );
}

function VolumeChart() {
  const y = (v: number) => v / 2.7034 - 80;
  return (
    <Pane h={209}>
      {volumes.map(({ tone, v }, i) =>
        tone === "g" ? (
          <rect key={i} x={xAt(i) - 4.8} y={y(v)} width="9.500" height={208 - y(v)} fill={GREEN} />
        ) : (
          <rect key={i} x={xAt(i) - 4.6} y={y(v) + 1.5} width="9.300" height={205.5 - y(v)} fill="#fff" stroke={RED} strokeWidth="2.800" />
        ),
      )}
      <Line pts={vol1} y={y} color="#f5bd14" w={3.2} />
      <Line pts={vol2} y={y} color="#c929cc" w={3.2} />
      <Line pts={vol3} y={y} color="#109412" w={3.2} />
      <Label x={15} y={64} w={169} size={54}>1759万</Label>
    </Pane>
  );
}

function MacdChart() {
  const y = (v: number) => v / 2.7034 - 363;
  return (
    <Pane h={209}>
      {macdBars.map((v, i) => (
        <rect key={i} x={xAt(i) - 0.7} y={Math.min(y(v), y(MACD_ZERO))} width="3" height={Math.abs(y(v) - y(MACD_ZERO))} fill={v < MACD_ZERO ? "#b83238" : "#1c961e"} />
      ))}
      <Label x={15} y={58} w={103} size={53}>2.60</Label>
      <Label x={16} y={205} w={127} size={53}>−1.27</Label>
      <Line pts={dif} y={y} color="#222222" w={3.2} />
      <Line pts={dea} y={y} color="#ecc01c" w={3.4} />
    </Pane>
  );
}

function KdjChart() {
  const y = (v: number) => v / 3 - 77;
  return (
    <Pane h={209}>
      {[55, 107, 159].map((g) => (
        <path key={g} d={`M13 ${g}H1247`} stroke="#d6d6d6" strokeWidth="1.800" strokeDasharray="18 7" />
      ))}
      <Label x={1206} y={54} w={40} size={34} fill="#cccccc">80</Label>
      <Label x={1206} y={107} w={40} size={34} fill="#cccccc">50</Label>
      <Label x={1206} y={159} w={40} size={34} fill="#cccccc">20</Label>
      <Line pts={kLine} y={y} color="#222222" w={3.4} />
      <Line pts={dLine} y={y} color="#e8bd1c" w={3.4} />
      <Line pts={jLine} y={y} color="#c929cc" w={3.4} />
      <Label x={14} y={58} w={166} size={54}>111.54</Label>
      <Label x={16} y={204} w={127} size={54}>−7.72</Label>
    </Pane>
  );
}

function TimeAxis() {
  const ticks = Array.from({ length: 107 }, (_, n) => n + 16);
  return (
    <div className="mx-[12px] h-[95px] bg-[#f7f7fc] text-[#666]">
      <svg width="1236" height="20" viewBox="12 0 1236 20" className="block">
        {ticks.map((i) => {
          const major = i === 38 || i === 80 || i === 122;
          return <rect key={i} x={xAt(i) - (major ? 1.2 : 0.6)} y="1" width={major ? 3.4 : 1.8} height={major ? 16 : 10} fill="#666" opacity={Math.min(1, (i - 14) * 0.16)} />;
        })}
      </svg>
      <div className="flex pl-[5px] text-[45px] leading-none tracking-[-0.700px]">
        <span className="w-[305px]">201407</span>
        <span className="w-[420px]">201802</span>
        <span className="w-[345px]">202108</span>
        <span>202502</span>
      </div>
    </div>
  );
}

function Banner() {
  return (
    <div className="mx-[20px] mt-[20px] flex h-[102px] items-center rounded-full bg-[#fcede4] pr-[43px] pl-[34px] text-[#e85a0c]">
      <svg width="54" height="46" viewBox="0 0 54 46" fill="#ea5504">
        <path d="M0 15h5v17H0zM10 13 51 1v44h-5V39L32 37c0 4-9 4-10-3L10 32z" />
      </svg>
      <span className="ml-[59px] text-[43.700px] leading-none">重磅催化来袭，创新药板块拐点或至！</span>
      <span className="ml-auto h-[41px] w-[2px] bg-[#e85a0c]" />
      <svg width="37" height="37" viewBox="0 0 37 37" stroke="#e85a0c" strokeWidth="3.600" className="ml-[19px]">
        <path d="M1 1 36 36M36 1 1 36" />
      </svg>
    </div>
  );
}

function BottomBar() {
  const item = "flex w-[238px] flex-col items-center gap-[19px]";
  return (
    <div className="flex h-[193px] border-t-2 border-[#cfd2d4] bg-[#f5f8fa] leading-none text-[#666]">
      <div className="flex w-[308px] flex-col pl-[34px]">
        <svg width="24" height="9" viewBox="0 0 24 9" className="mt-[9px] ml-[110px]"><path d="M12 0 24 9H0z" fill="#777" /></svg>
        <span className="mt-[8px] ml-[16px] text-[60px] tracking-[-1.800px] text-[#e8252a]">3336.05</span>
        <div className="mt-[1px] flex items-end justify-between">
          <span className="text-[51px]">上证</span>
          <span className="text-[50px] tracking-[-0.500px] text-[#e8252a]">0.11%</span>
        </div>
      </div>
      <div className="flex pt-[10px] text-[51px]">
        <div className={item}>
          <svg width="76" height="66" viewBox="0 0 76 66" fill="none" stroke="#666" strokeWidth="3.400">
            <path d="M21 8a29 29 0 0 1 43 39l8-6M54 58A30 30 0 0 1 12 19L3 23M27 19l11 14 11-14M38 32v20M26 32h24M26 42h24" />
          </svg>
          交易
        </div>
        <div className={item}>
          <svg width="66" height="66" viewBox="0 0 66 66" fill="none" stroke="#666" strokeWidth="3.600">
            <path d="M45 5H10Q4 5 4 11v45q0 6 6 6h47q6 0 6-6V22" />
            <path d="M25 42 28 35 50 13l5 4L32 40zM53 10l5-5q3-1 5 1v3l-5 5z" fill="#666" stroke="none" />
          </svg>
          发帖
        </div>
        <div className={item}>
          <svg width="62" height="66" viewBox="0 0 62 66" fill="none" stroke="#666" strokeWidth="3.600">
            <rect x="2" y="5" width="25" height="25" rx="4" />
            <rect x="2" y="36" width="25" height="25" rx="4" />
            <rect x="33" y="36" width="25" height="25" rx="4" />
            <rect x="36" y="7.500" width="20" height="20" rx="3" transform="rotate(45 46 17.500)" />
          </svg>
          功能
        </div>
        <div className={item}>
          <svg width="66" height="66" viewBox="0 0 66 66">
            <circle cx="33" cy="33" r="30.500" fill="none" stroke="#666" strokeWidth="3.400" />
            <circle cx="20" cy="33" r="3.400" fill="#666" />
            <circle cx="33" cy="33" r="3.400" fill="#666" />
            <circle cx="46" cy="33" r="3.400" fill="#666" />
          </svg>
          设自选
        </div>
      </div>
    </div>
  );
}

export default function App() {
  return (
    <div className="flex h-[2844px] w-[1260px] flex-col overflow-hidden bg-white font-[Roboto,'Noto_Sans_CJK_SC',sans-serif] font-medium">
      <StatusBar />
      <Header />
      <Quotes />
      <Notice />
      <PeriodTabs />
      <MaHeader />
      <PriceChart />
      <VolumeHeader />
      <VolumeChart />
      <div className="flex h-[74px] items-center pl-[16px] text-[48px] leading-none whitespace-nowrap">
        <Chip className="w-[166px]">MACD</Chip>
        <div className="ml-[3px] flex w-[265px] items-center gap-[12px] tracking-[-0.500px] text-[#222]">DIF:−0.83<Arrow up w={26} h={41} /></div>
        <div className="flex w-[282px] items-center gap-[12px] tracking-[-0.700px] text-[#efbe10]">DEA:−1.00<Arrow up w={26} h={41} /></div>
        <div className="flex items-center gap-[12px] tracking-[-0.500px] text-[#cf1fd6]">M:0.36<Arrow up w={26} h={41} /></div>
      </div>
      <MacdChart />
      <div className="flex h-[75px] items-center pl-[16px] text-[48px] leading-none whitespace-nowrap">
        <Chip className="w-[124px]">KDJ</Chip>
        <div className="flex w-[227px] items-center gap-[12px] pl-[2px] text-[#222]">K:58.72<Arrow up w={26} h={41} /></div>
        <div className="flex w-[226px] items-center gap-[12px] tracking-[-0.300px] text-[#efbe10]">D:50.92<Arrow up w={26} h={41} /></div>
        <div className="flex items-center gap-[12px] tracking-[-0.700px] text-[#cf1fd6]">J:74.31<Arrow up w={26} h={41} /></div>
      </div>
      <KdjChart />
      <TimeAxis />
      <Banner />
      <div className="mt-[19px] flex h-[59px] shrink-0 items-start overflow-hidden border-t-2 border-[#d0d0d0] pt-[34px] pl-[73px] text-[47px] leading-none text-[#666]">
        <span className="w-[169px] shrink-0 font-bold text-[#e65a0c]">股吧</span>
        {["盘口", "资讯", "公告", "研报", "财务", "资料"].map((t) => (
          <span key={t} className="w-[170px] shrink-0">{t}</span>
        ))}
      </div>
      <BottomBar />
    </div>
  );
}
